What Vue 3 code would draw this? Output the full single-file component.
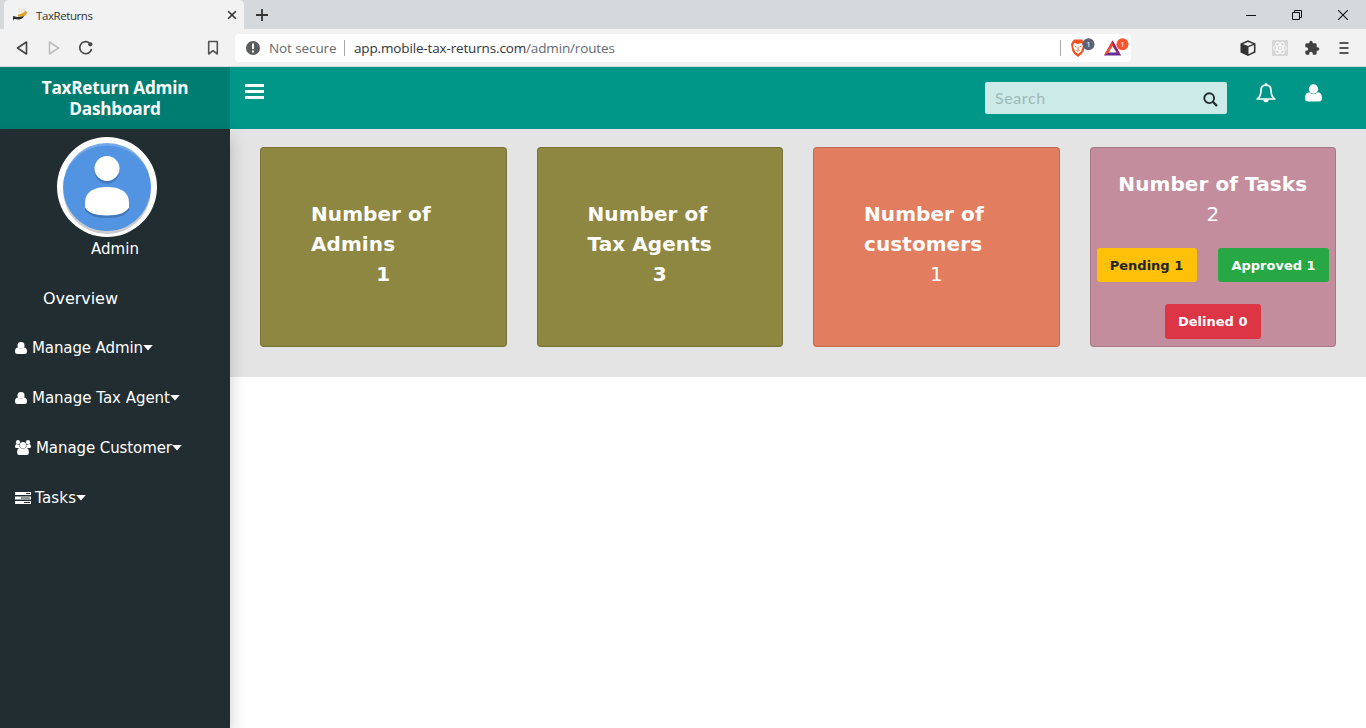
<script setup>
const navItems = [
  { label: 'Manage Admin', icon: 'user', w: 111 },
  { label: 'Manage Tax Agent', icon: 'user', w: 138 },
  { label: 'Manage Customer', icon: 'users', w: 136 },
  { label: 'Tasks', icon: 'tasks', w: 41 },
]
const cards = [
  { lines: ['Number of', 'Admins'], value: 1, tone: 'olive', bold: true },
  { lines: ['Number of', 'Tax Agents'], value: 3, tone: 'olive', bold: true },
  { lines: ['Number of', 'customers'], value: 1, tone: 'coral', bold: false },
]
</script>

<template>
  <div class="window">
    <div class="tabstrip">
      <div class="tab">
        <svg class="favicon" width="16" height="16" viewBox="0 0 16 16">
          <path d="M7 1v5M10 2v4M12 1v3" stroke="#e8ddcb" stroke-width="1.2" />
          <path d="M6 7.500q4 0 8-4l1 2q-1 4-5 4H6z" fill="#e0a021" />
          <path d="M1 9l4 1q4 0 7-1-1 3-5 3.500l-5-.5-1 2z" fill="#292a25" />
        </svg>
        <span class="tab-title">TaxReturns</span>
        <svg class="tab-close" width="10" height="10" viewBox="0 0 10 10"><path d="M1.200 1.200l7.600 7.600M8.800 1.200L1.200 8.800" stroke="#333" stroke-width="1.600" /></svg>
      </div>
      <svg class="plus" width="12" height="12" viewBox="0 0 12 12"><path d="M6 0v12M0 6h12" stroke="#333" stroke-width="1.800" /></svg>
      <div class="win-controls">
        <svg width="10" height="10" viewBox="0 0 10 10"><path d="M0 5.500h10" stroke="#111" /></svg>
        <svg width="10" height="10" viewBox="0 0 10 10" fill="none" stroke="#111"><path d="M.5 2.500h7v7h-7zM2.500 2.500v-2h7v7h-2" /></svg>
        <svg width="10" height="10" viewBox="0 0 10 10"><path d="M0 0l10 10M10 0L0 10" stroke="#111" stroke-width="1.100" /></svg>
      </div>
    </div>
    <div class="toolbar">
      <svg class="back" width="13" height="16" viewBox="0 0 13 16" fill="none" stroke="#444" stroke-width="1.600" stroke-linejoin="round"><path d="M10.500 2v12L1.500 8z" /></svg>
      <svg class="fwd" width="13" height="16" viewBox="0 0 13 16" fill="none" stroke="#bfbfbf" stroke-width="1.600" stroke-linejoin="round"><path d="M1.500 2v12l9-6z" /></svg>
      <svg class="reload" width="16" height="16" viewBox="0 0 16 16"><path d="M11.500 3A6 6 0 1 0 13.600 9" fill="none" stroke="#444" stroke-width="1.600" /><circle cx="12.300" cy="4.300" r="2.100" fill="#444" /></svg>
      <svg class="mark" width="12" height="16" viewBox="0 0 12 16"><path d="M1.700 1.500h8.600v12.500L6 10.700 1.700 14z" fill="none" stroke="#555" stroke-width="1.600" stroke-linejoin="round" /></svg>
      <div class="address">
        <svg class="warn" width="14" height="14" viewBox="0 0 14 14"><circle cx="7" cy="7" r="7" fill="#5a5c5f" /><path d="M7 2.500v5.500M7 9.500v2" stroke="#fff" stroke-width="2" /></svg>
        <span class="secure">Not secure</span>
        <i class="bar"></i>
        <span class="url">app.mobile-tax-returns.com<span>/admin/routes</span></span>
        <i class="bar right"></i>
        <svg class="brave" width="25" height="20" viewBox="0 0 25 20">
          <path d="M4 1.500h8l1.500 2L15 6l-1.300 7-2 3L8 19l-3.700-3-2-3L1 6l1.500-2.500z" fill="#f4511e" />
          <path d="M4 5l4 1 4-1 1 3-2 5.500L8 16l-3-2.500L3 8z" fill="#fff" />
          <path d="M5 8.500l1.500.5M11 8.500L9.500 9M8 9v3M6.500 12.500l1.500.7 1.500-.7" stroke="#f4511e" fill="none" stroke-width=".9" />
          <circle cx="18.500" cy="6.200" r="6" fill="#5d6175" />
          <text x="18.500" y="9.200" text-anchor="middle" class="count">1</text>
        </svg>
        <svg class="bat" width="26" height="20" viewBox="0 0 26 20">
          <path d="M9.500 2.500L1 17.500h17z" fill="#662d91" /><path d="M9.500 2.500L1 17.500l5-3 4-7z" fill="#ff4724" /><path d="M9.500 2.500L18 17.500l-4-3-4-7z" fill="#9e1f63" /><path d="M9.500 8L5.700 14.500h7.800z" fill="#fff" />
          <circle cx="19.500" cy="6.200" r="6" fill="#fb542b" />
          <text x="19.500" y="9.200" text-anchor="middle" class="count">1</text>
        </svg>
      </div>
      <div class="extensions">
        <svg width="16" height="16" viewBox="0 0 16 16"><path d="M8 .2l7.500 3.300v9L8 16 .5 12.500v-9z" fill="#333" /><path d="M8.500 7.200l5.400-2.300v6.700l-5.400 2.600z" fill="#f2f2f2" /><path d="M3 3.900l5-2 5 2-5 2z" fill="#f2f2f2" /></svg>
        <svg width="16" height="16" viewBox="0 0 16 16"><path d="M0 0h16v16H0z" fill="#d8d8d8" /><g fill="none" stroke="#fafafa" stroke-width="1"><ellipse cx="8" cy="8" rx="6.500" ry="2.500" /><ellipse cx="8" cy="8" rx="6.500" ry="2.500" transform="rotate(60 8 8)" /><ellipse cx="8" cy="8" rx="6.500" ry="2.500" transform="rotate(120 8 8)" /></g><circle cx="8" cy="8" r="1.300" fill="#fff" /></svg>
        <svg width="16" height="16" viewBox="0 0 24 24"><path d="M20.500 11H19V7a2 2 0 0 0-2-2h-4V3.500a2.500 2.500 0 0 0-5 0V5H4a2 2 0 0 0-2 2v3.800h1.500a2.700 2.700 0 0 1 0 5.400H2V20a2 2 0 0 0 2 2h3.800v-1.500a2.700 2.700 0 0 1 5.400 0V22H17a2 2 0 0 0 2-2v-4h1.500a2.500 2.500 0 0 0 0-5z" fill="#404040" /></svg>
        <svg width="16" height="16" viewBox="0 0 16 16"><path d="M3.500 3h9M3.500 8h9M3.500 13h9" stroke="#555" stroke-width="1.800" /></svg>
      </div>
    </div>

    <div class="app">
      <header class="header">
        <div class="brand"><b>TaxReturn Admin</b><b class="second">Dashboard</b></div>
        <svg class="burger" width="19" height="15" viewBox="0 0 19 15"><path d="M0 1.500h19M0 7.500h19M0 13.500h19" stroke="#fff" stroke-width="3" /></svg>
        <div class="search">
          <span>Search</span>
          <svg width="15" height="15" viewBox="0 0 15 15"><circle cx="6.200" cy="6.200" r="4.900" fill="none" stroke="#222d32" stroke-width="1.900" /><path d="M9.800 9.800l3.600 3.600" stroke="#222d32" stroke-width="2.200" stroke-linecap="round" /></svg>
        </div>
        <svg class="bell" width="20" height="20" viewBox="0 0 20 20"><path d="M10 2.200C6.700 2.200 5 4.600 5 7.500c0 4.200-1.200 6.700-3.700 8.500h17.400C16.200 14.200 15 11.700 15 7.500c0-2.900-1.700-5.300-5-5.300z" fill="none" stroke="#fff" stroke-width="1.700" stroke-linejoin="round" /><path d="M7.300 16.500h5.400a2.700 2.700 0 0 1-5.400 0z" fill="#fff" /><circle cx="10" cy="1.600" r="1.300" fill="#fff" /></svg>
        <svg class="account" width="17" height="18" viewBox="0 0 17 18" fill="#fff"><circle cx="8.500" cy="5" r="4.700" /><path d="M4.300 8.200q1.900 1.900 4.200 1.900t4.200-1.900Q17 8.200 17 14.200q0 3.300-3.300 3.300H3.300Q0 17.500 0 14.200 0 8.200 4.300 8.200z" /></svg>
      </header>

      <div class="body">
        <aside class="sidebar">
          <div class="profile">
            <svg class="avatar" width="100" height="100" viewBox="0 0 100 100">
              <circle cx="50" cy="50" r="50" fill="#fff" /><circle cx="50" cy="53" r="44" fill="#c9cbcc" /><circle cx="50" cy="50" r="44" fill="#77a9e8" /><path d="M6.300 50a43.700 41.500 0 0 1 87.400 0a43.700 44 0 0 1-87.400 0z" fill="#5294e2" />
              <g fill="#3f78bd"><circle cx="50" cy="34" r="12.500" /><path d="M28 68c0-12 10-16 22-16s22 4 22 16v5c-3 5-10 8-22 8s-19-3-22-8z" /></g>
              <g fill="#fff"><circle cx="50" cy="31.500" r="12.500" /><path d="M28 66c0-12 10-16 22-16s22 4 22 16v4.500c-3 5-10 8-22 8s-19-3-22-8z" /></g>
            </svg>
            <svg class="fit" width="48" height="24"><text x="0" y="17" textLength="48">Admin</text></svg>
          </div>
          <nav>
            <a class="overview"><svg class="fit" width="76" height="24"><text x="0" y="18" textLength="75">Overview</text></svg></a>
            <a v-for="item in navItems" :key="item.label">
              <svg v-if="item.icon === 'user'" class="nav-icon person" width="12" height="12" viewBox="0 0 17 17.500" preserveAspectRatio="none"><circle cx="8.500" cy="5" r="5" /><path d="M4.300 8.200q1.900 1.900 4.200 1.900t4.200-1.900Q17 8.200 17 14.200q0 3.300-3.300 3.300H3.300Q0 17.500 0 14.200 0 8.200 4.300 8.200z" /></svg>
              <svg v-else-if="item.icon === 'users'" class="nav-icon group" width="16" height="15" viewBox="0 0 17 15" preserveAspectRatio="none"><circle cx="3.200" cy="2.200" r="2.200" /><circle cx="13.800" cy="2.200" r="2.200" /><circle cx="8.500" cy="5.200" r="3.300" /><path d="M1.500 4Q3.200 5.200 4.800 4.500 4.400 6.500 5.500 8H1.500Q0 8 0 6.700 0 4.500 1.500 4zM15.500 4Q13.800 5.200 12.200 4.500 12.600 6.500 11.500 8h4Q17 8 17 6.700 17 4.500 15.500 4zM5.500 7.700q3 2.300 6 0 3.300.3 3.300 4.700 0 2.600-2.400 2.600H4.600Q2.200 15 2.200 12.400 2.200 8 5.500 7.700z" /></svg>
              <svg v-else class="nav-icon list" width="16" height="12" viewBox="0 0 16 12"><path d="M0 0h16v3H0zM0 4.500h16v3H0zM0 9h16v3H0z" /><path d="M11 1.500h4M6 6h9M9 10.500h6" stroke="#222d32" /></svg>
              <svg class="fit" :width="item.w" height="24"><text x="0" y="17" :textLength="item.w">{{ item.label }}</text></svg>
              <svg class="caret" width="10" height="6" viewBox="0 0 10 6"><path d="M.2 0h9.600L5 5.500z" /></svg>
            </a>
          </nav>
        </aside>
        <main>
          <section class="summary">
            <article v-for="card in cards" :key="card.lines[1]" class="card" :class="card.tone">
              <div class="copy">
                <b v-for="line in card.lines" :key="line">{{ line }}</b>
                <span class="value" :class="{ strong: card.bold }">{{ card.value }}</span>
              </div>
            </article>
            <article class="card mauve">
              <b>Number of Tasks</b>
              <span class="value">2</span>
              <div class="pair"><button class="pending">Pending 1</button><button class="approved">Approved 1</button></div>
              <button class="declined">Delined 0</button>
            </article>
          </section>
        </main>
      </div>
    </div>
  </div>
</template>

<style>
body { margin: 0; overflow: hidden; }
</style>

<style scoped>
* { box-sizing: border-box; }
svg { display: block; flex: none; }
.window { width: 1366px; height: 728px; display: flex; flex-direction: column; background: #fff; overflow: hidden; }
.tabstrip { height: 29px; flex: none; background: #d5d9dc; display: flex; align-items: center; padding-left: 4px; font-family: "Open Sans", "Noto Sans", sans-serif; }
.tab { width: 240px; height: 29px; background: #f2f2f2; border-radius: 5px 5px 0 0; display: flex; align-items: center; padding: 1px 7px 0 8px; }
.tab-title { margin-left: 8px; font-size: 11.500px; letter-spacing: -.42px; color: #333; flex: 1; white-space: nowrap; }
.plus { margin: 1px 0 0 12px; }
.win-controls { margin-left: auto; padding-right: 18px; display: flex; gap: 36px; }
.toolbar { height: 38px; flex: none; background: #f2f2f2; border-bottom: 1px solid #d4d8da; display: flex; align-items: center; font-family: "Open Sans", "Noto Sans", sans-serif; }
.back { margin-left: 16px; }
.fwd { margin-left: 19px; }
.reload { margin-left: 17px; }
.mark { margin-left: 113px; }
.address { width: 896px; height: 28px; margin-left: 16px; background: #fff; border-radius: 4px; display: flex; align-items: center; font-size: 14px; }
.warn { margin-left: 11px; }
.secure { width: 67px; margin-left: 9px; color: #66696d; font-size: 13.500px; letter-spacing: -.1px; white-space: nowrap; }
.bar { width: 1px; height: 16px; background: #aaa; margin: 0 9px 0 8px; }
.url { color: #303438; font-size: 13.500px; letter-spacing: -.15px; white-space: nowrap; }
.url span { color: #666a6f; }
.bar.right { margin: 0 9px 0 auto; }
.brave { margin-right: 8px; }
.bat { margin-right: 2px; }
.count { font-size: 8px; fill: #fff; }
.extensions { display: flex; gap: 16px; margin: 0 14px 0 auto; }
.app { flex: 1; display: flex; flex-direction: column; font-family: "DejaVu Sans", sans-serif; }
.header { height: 62px; flex: none; background: #009688; display: flex; }
.brand { width: 230px; background: #007d71; color: #fff; display: flex; flex-direction: column; align-items: center; padding-top: 10px; font: 17.200px/21px "Open Sans", "Noto Sans", sans-serif; }
.brand b { letter-spacing: -.25px; font-weight: 700; }
.burger { margin: 17px 0 0 15px; }
.search { width: 242px; height: 32px; margin: 15px 0 0 auto; background: #cceae7; border-radius: 2px; display: flex; align-items: center; justify-content: space-between; padding: 2px 9px 0 10px; color: #9db9b8; font: 16px Lato, sans-serif; letter-spacing: .6px; }
.search span { margin-top: -4px; }
.bell { margin: 16px 0 0 29px; }
.account { margin: 17px 44px 0 29px; }
.body { flex: 1; display: flex; }
.sidebar { position: relative; z-index: 1; width: 230px; flex: none; background: #222d32; color: #fff; box-shadow: 0 8px 17px rgba(0, 0, 0, .2); }
.profile { display: flex; flex-direction: column; height: 144px; padding: 8px 0 0 57px; }
.profile .fit { margin-left: 34px; }
.fit { overflow: visible; }
.fit text { font: 15px "DejaVu Sans", sans-serif; fill: #fff; }
.overview .fit text { font-size: 16px; }
nav a { height: 50px; display: flex; align-items: center; padding-left: 15px; }
nav a.overview { padding-left: 43px; }
.nav-icon, .caret { fill: #fff; }
.person { margin-right: 5px; }
.group { margin-right: 5px; margin-top: -1px; }
.list { margin-right: 4px; margin-top: -1px; }
main { flex: 1; min-width: 0; }
.summary { height: 248px; background: #e4e4e4; display: grid; grid-template-columns: repeat(4, 1fr); gap: 30px; padding: 18px 30px 30px; }
.card { min-width: 0; border: 1px solid rgba(0, 0, 0, .15); border-radius: 4px; color: #fff; font-size: 20px; line-height: 30px; display: flex; flex-direction: column; }
.olive { background-color: #8e8741; }
.coral { background-color: #e27d60; }
.mauve { background-color: #c38d9e; align-items: center; padding-top: 21px; }
.copy { padding: 51px 50px 49px; display: flex; flex-direction: column; }
b { white-space: nowrap; letter-spacing: .08px; }
.value { text-align: center; }
.strong { font-weight: 700; }
.pair { width: 100%; display: flex; justify-content: space-between; padding: 0 6px; margin: 19px 0 22px; }
button { border: 0; border-radius: 3px; height: 34px; padding: 0; color: #fff; font: bold 13px "DejaVu Sans", sans-serif; letter-spacing: 0; white-space: nowrap; }
.pending { width: 100px; background: #ffc107; color: #212529; }
.approved { width: 111px; background: #28a745; }
.declined { width: 96px; height: 35px; background: #dc3545; }
</style>
